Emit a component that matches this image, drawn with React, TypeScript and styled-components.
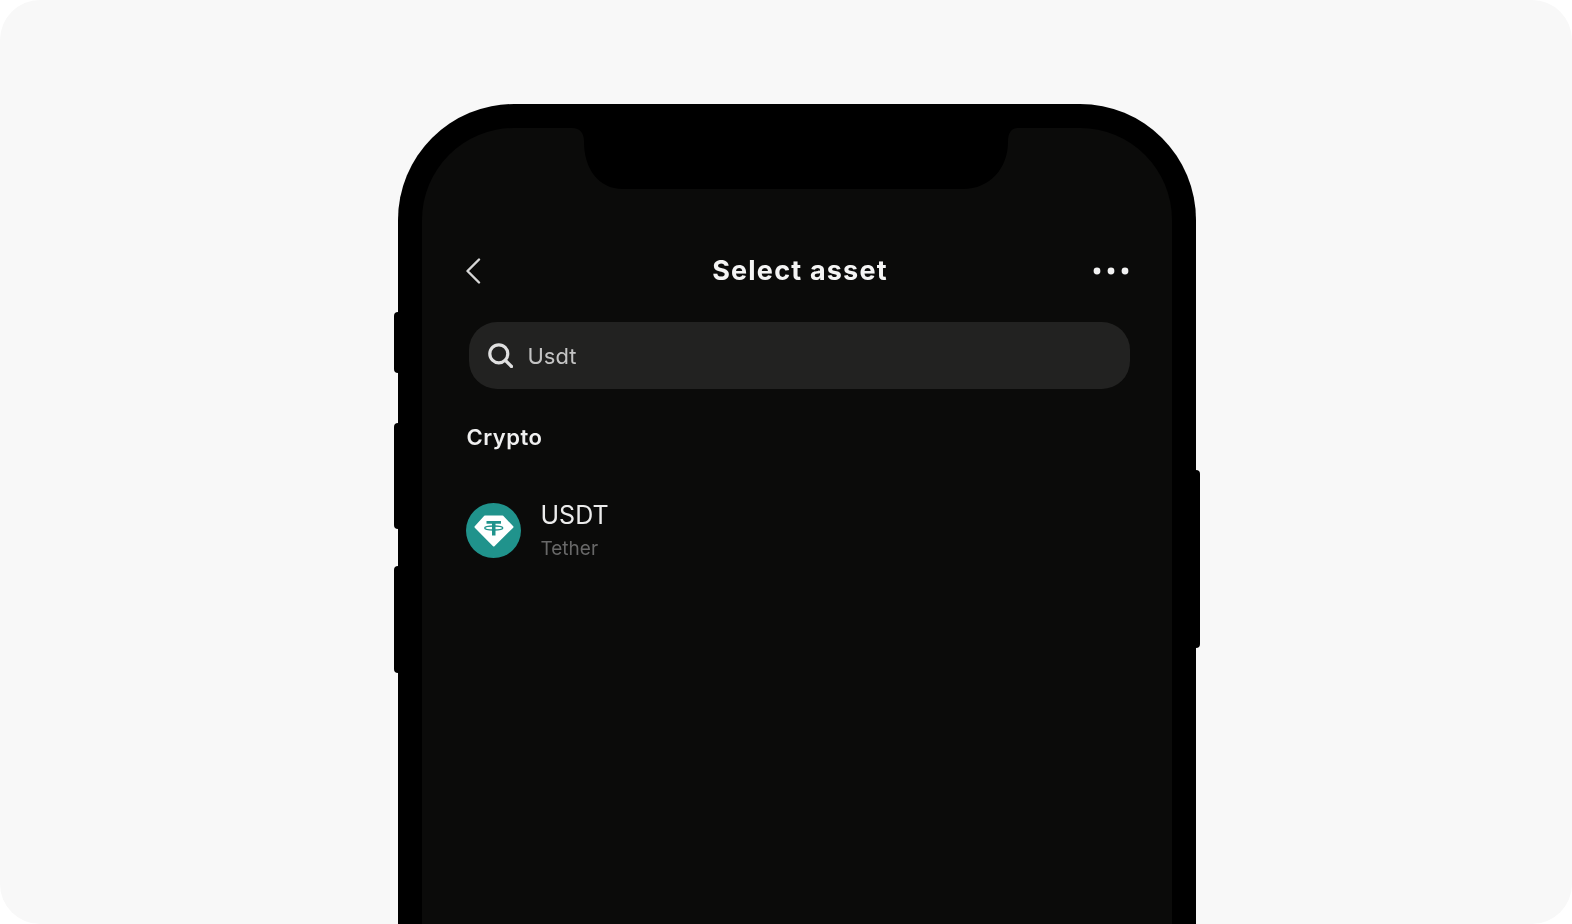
import React from "react";
import styled, { createGlobalStyle } from "styled-components";

const Global = createGlobalStyle`
  html, body { margin: 0; padding: 0; background: #ffffff; overflow: hidden; }
  #root { width: 1572px; height: 924px; }
`;

const Canvas = styled.div`
  width: 1572px;
  height: 924px;
  box-sizing: border-box;
  padding-top: 104px;
  background: #f8f8f8;
  border-radius: 40px;
  overflow: hidden;
  display: flex;
  justify-content: center;
  font-family: Inter, "Liberation Sans", sans-serif;
`;

const Phone = styled.div`
  position: relative;
  flex: none;
  width: 798px;
  height: 900px;
  box-sizing: border-box;
  margin-left: 21px;
  padding: 24px 24px 0;
  background: #000;
  border-radius: 116px 116px 0 0;
`;

const SideButton = styled.div<{ $side: "left" | "right"; $top: number; $height: number }>`
  position: absolute;
  top: ${(p) => p.$top}px;
  height: ${(p) => p.$height}px;
  width: 5px;
  background: #000;
  ${(p) =>
    p.$side === "left"
      ? "left: -4px; border-radius: 4px 0 0 4px;"
      : "right: -4px; border-radius: 0 4px 4px 0;"}
`;

const Screen = styled.div`
  position: relative;
  height: 100%;
  box-sizing: border-box;
  padding: 129px 44px 0;
  background: #0b0b0a;
  border-radius: 92px 92px 0 0;
  overflow: hidden;
`;

const Notch = styled.svg`
  position: absolute;
  top: 0;
  left: 150px;
`;

const Header = styled.header`
  display: flex;
  align-items: center;
  justify-content: space-between;
  height: 28px;
  color: #fff;
`;

const Title = styled.h1`
  margin: 0;
  font-size: 27px;
  line-height: 28px;
  font-weight: 700;
  letter-spacing: 1.2px;
  color: #f4f4f4;
  filter: blur(0.4px);
`;

const IconSlot = styled.div<{ $wide?: boolean; $end?: boolean }>`
  width: ${(p) => (p.$wide ? 70 : 64)}px;
  height: 28px;
  display: flex;
  align-items: center;
  justify-content: ${(p) => (p.$end ? "flex-end" : "flex-start")};
  margin-right: ${(p) => (p.$end ? -1 : 0)}px;
`;

const SearchBar = styled.div`
  margin: 37px 0 0 3px;
  width: 661px;
  height: 67px;
  box-sizing: border-box;
  padding: 0 0 0 19px;
  display: flex;
  align-items: center;
  gap: 15px;
  background: #222221;
  border-radius: 28px;
`;

const SearchText = styled.span`
  font-size: 22px;
  line-height: 26px;
  color: #c4c4c4;
  filter: blur(0.4px);
`;

const SectionLabel = styled.h2`
  margin: 34px 0 0 1px;
  font-size: 22px;
  line-height: 28px;
  font-weight: 600;
  letter-spacing: 0.5px;
  color: #f0f0f0;
  filter: blur(0.4px);
`;

const AssetRow = styled.div`
  margin-top: 49px;
  display: flex;
  align-items: center;
  gap: 20px;
`;

const AssetText = styled.div`
  display: flex;
  flex-direction: column;
  gap: 7px;
`;

const AssetSymbol = styled.span`
  font-size: 25px;
  line-height: 30px;
  color: #ececec;
  filter: blur(0.4px);
`;

const AssetName = styled.span`
  font-size: 19px;
  line-height: 24px;
  color: #686868;
  filter: blur(0.4px);
`;

const BackIcon = () => (
  <svg width="15" height="26" viewBox="0 0 15 26" fill="none">
    <path d="M13 1.500 1.500 13 13 24.500" stroke="#d6d6d6" strokeWidth="2.4" strokeLinecap="round" strokeLinejoin="round" />
  </svg>
);

const MoreIcon = () => (
  <svg width="36" height="8" viewBox="0 0 36 8" fill="#f2f2f2">
    <circle cx="4" cy="4" r="3.4" />
    <circle cx="18" cy="4" r="3.4" />
    <circle cx="32" cy="4" r="3.4" />
  </svg>
);

const SearchIcon = () => (
  <svg width="25" height="25" viewBox="0 0 25 25" fill="none" stroke="#e0e0e0" strokeWidth="3.2" strokeLinecap="round">
    <circle cx="10.800" cy="10.800" r="9" />
    <path d="m18 18 5.500 5.500" />
  </svg>
);

const TetherIcon = () => (
  <svg width="55" height="55" viewBox="0 0 55 55">
    <circle cx="27.500" cy="27.500" r="27.500" fill="#20938c" />
    <path d="M19 13.500H36.500L46.500 24 27.750 42.500 9.500 24z" fill="#fff" stroke="#fff" strokeWidth="2" strokeLinejoin="round" />
    <path d="M20.500 18h14.500v2.800h-5.500v11.700h-3.500V20.800h-5.500z" fill="#20938c" />
    <ellipse cx="27.750" cy="25" rx="9" ry="2" fill="none" stroke="#20938c" strokeWidth="1.400" />
  </svg>
);

export default function App() {
  return (
    <>
      <Global />
      <Canvas>
        <Phone>
          <SideButton $side="left" $top={208} $height={61} />
          <SideButton $side="left" $top={319} $height={106} />
          <SideButton $side="left" $top={462} $height={107} />
          <SideButton $side="right" $top={366} $height={178} />
          <Screen>
            <Notch width="446" height="62" viewBox="0 0 446 62">
              <path d="M0 0H446C440 0 436 4 436 14 436 40 418 61 391 61H51C26 61 12 40 12 14 12 5 8 0 0 0z" fill="#000" />
            </Notch>
            <Header>
              <IconSlot $wide>
                <BackIcon />
              </IconSlot>
              <Title>Select asset</Title>
              <IconSlot $end>
                <MoreIcon />
              </IconSlot>
            </Header>
            <SearchBar>
              <SearchIcon />
              <SearchText>Usdt</SearchText>
            </SearchBar>
            <SectionLabel>Crypto</SectionLabel>
            <AssetRow>
              <TetherIcon />
              <AssetText>
                <AssetSymbol>USDT</AssetSymbol>
                <AssetName>Tether</AssetName>
              </AssetText>
            </AssetRow>
          </Screen>
        </Phone>
      </Canvas>
    </>
  );
}
